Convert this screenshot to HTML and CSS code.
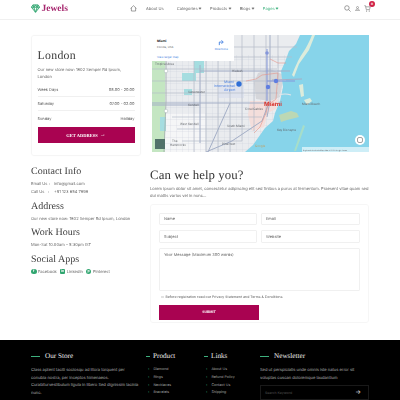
FILE: index.html
```html
<!DOCTYPE html>
<html lang="en">
<head>
<meta charset="utf-8">
<title>Jewels - Contact</title>
<link rel="stylesheet" href="styles.css">
</head>
<body>
<header class="header">
  <a class="logo">
    <svg class="gem" viewBox="0 0 10 10"><path d="M2.2 1h5.600L9.600 3.600 5 9.200.4 3.600zM.4 3.600h9.200M3.200 3.600 5 9.200l1.800-5.600M3.200 3.600 2.200 1M6.800 3.600 7.800 1M3.200 3.600 5 1l1.800 2.600" fill="#d5f0e2" stroke="#2fa56f" stroke-width="1"/></svg>
    <span>Jewels</span>
  </a>
  <nav class="nav">
    <svg class="home" viewBox="0 0 10 10"><path d="M.8 5 5 1l4.200 4M2 4v4.600h6V4" fill="none" stroke="#555" stroke-width=".8"/></svg>
    <span class="about">About Us</span>
    <span class="menu">Categories<i class="chev"></i></span>
    <span class="menu">Products<i class="chev"></i></span>
    <span class="menu">Blogs<i class="chev"></i></span>
    <span class="menu active">Pages<i class="chev"></i></span>
  </nav>
  <div class="tools">
    <svg class="tool" viewBox="0 0 10 10"><circle cx="4.200" cy="4.200" r="3.200" fill="none" stroke="#666" stroke-width=".9"/><path d="m6.600 6.600 2.800 2.800" stroke="#666" stroke-width=".9"/></svg>
    <svg class="tool small" viewBox="0 0 10 10"><circle cx="5" cy="3" r="2" fill="none" stroke="#666" stroke-width="1"/><path d="M1 9.200c0-4 8-4 8 0z" fill="none" stroke="#666" stroke-width="1"/></svg>
    <div class="cart">
      <svg class="tool" viewBox="0 0 10 10"><path d="M.5 1h1.600l1.200 5.600h4.600l1-4H2.500" fill="none" stroke="#666" stroke-width=".8"/><circle cx="3.700" cy="8.500" r=".8" fill="#666"/><circle cx="7.500" cy="8.500" r=".8" fill="#666"/></svg>
      <b class="badge">0</b>
    </div>
  </div>
</header>

<main class="main">
  <section class="top">
    <aside class="store">
      <h2 class="city">London</h2>
      <p class="txt store-addr">Our new store now: 1802 Semper Rd Ipsum, London</p>
      <div class="hours"><span>Week Days</span><span>08.00 - 20.00</span></div>
      <div class="hours"><span>Saturday</span><span>07.00 - 02.00</span></div>
      <div class="hours last"><span>Sunday</span><span>Holiday</span></div>
      <a class="get">GET ADDRESS <span class="arr">→</span></a>
    </aside>
    <div class="map">
      <svg class="map-art" viewBox="0 0 217 117" preserveAspectRatio="none">
        <defs>
          <pattern id="grid" width="6" height="6" patternUnits="userSpaceOnUse">
            <path d="M6 0H0V6" fill="none" stroke="#cdd0da" stroke-width=".5"/>
          </pattern>
        </defs>
        <rect width="217" height="117" fill="#eaecef"/>
        <path d="M0 0h13v117H0zM13 0h30v26H13z" fill="#c4e6c2"/>
        <path d="M13 78h40v39H13z" fill="#f5f6f7"/>
        <rect x="13" y="20" width="137" height="97" fill="url(#grid)"/>
        <path d="M42 26h10v12H42zM30 38h14v8H30zM32 54h8v6h-8zM8 82h6v14H8z" fill="#a4dde0"/>
        <path d="M66 50h26v13H66z" fill="#dfe3ee"/>
        <path d="M106 38l12-4 14 6-4 22-10 4-14-2-2-16z" fill="#d5d6da"/>
        <path d="M98 66h20l8-2-2 10-8 4-4 14-12 4 -4-16z" fill="#f4dedb"/>
        <path d="M148 0h69v117H93l8-7 12-17 8-7 2-8 5-12 3-14-2-16 4-9 4-11 7-7z" fill="#86d4ea"/>
        <path d="M140 40q6-16 12-24 4-6 8-16h3l-6 15-10 14-5 13zM147 50l4-1 1 12-3 1zM152 65l6-2 2 3-5 4z" fill="#dcecdc"/>
        <path d="M127 80l12-4 6 2 2 4-12 3-6 2z" fill="#bcd8b4"/>
        <path d="M151 90l2 1-9 25h-2z" fill="#a6dec8"/>
        <path d="M120 46q6-2 14-1M127 60q6-2 12 0" fill="none" stroke="#e3e6ea" stroke-width="1.200"/>
        <g fill="none" stroke="#b6bbc9" stroke-width=".7">
          <path d="M0 34h125M0 46h128M0 58h126M20 82h90M25 94h75M30 106h60M15 22h125M40 12h105"/>
          <path d="M42 26v91M54 0v117M66 0v117M78 20v97M90 0v106M102 0v96M114 0v80M126 0v50"/>
        </g>
        <g fill="none" stroke="#a3aec6" stroke-width="1">
          <path d="M0 68h116M0 70h48M48 30v78M118 0v66l-3 16M138 36H48M78 68l-22 49M116 70l-6 16-30 20-26 11M150 44l-30 1"/>
        </g>
        <g fill="none" stroke="#8496da" stroke-width="1">
          <path d="M115 14v52M115 46h28"/>
        </g>
        <path d="M14 0v66l-2 51" fill="none" stroke="#a6b2b0" stroke-width=".9"/>
        <path d="M94 46l10-2 6-4 16-2-2 26-8 6-2 8-6 14-6 6M118 24l8 4 8 0" fill="none" stroke="#e49488" stroke-width=".6"/>
        <circle cx="115" cy="18" r="1.800" fill="#8496da"/>
        <circle cx="124" cy="46" r="2.200" fill="#5f7de0"/>
        <circle cx="116" cy="52" r="2.200" fill="#5f7de0"/>
        <circle cx="87" cy="49" r="2.700" fill="#2f6fd6"/>
        <circle cx="14" cy="36" r="1.800" fill="#fff" stroke="#9aa" stroke-width=".4"/>
        <circle cx="14" cy="76" r="1.800" fill="#fff" stroke="#9aa" stroke-width=".4"/>
        <text class="m" x="80" y="37">Hialeah</text>
        <text class="m m-blue" x="72" y="48">Miami</text>
        <text class="m m-blue" x="62" y="52">International</text>
        <text class="m m-blue" x="72" y="56">Airport</text>
        <text class="m" x="36" y="58">Sweetwater</text>
        <text class="m" x="36" y="71">Kendall</text>
        <text class="m m-big" x="112" y="71">Miami</text>
        <text class="m" x="93" y="75">Coral Gables</text>
        <text class="m" x="28" y="90">West Kendall</text>
        <text class="m" x="75" y="92">South Miami</text>
        <text class="m" x="150" y="70">Miami Beach</text>
        <text class="m" x="125" y="96">Key Biscayne</text>
        <text class="m" x="20" y="107">The</text>
        <text class="m" x="18" y="111">Hammocks</text>
        <text class="m" x="70" y="110">Pinecrest</text>
        <text class="m" x="3" y="30">Tropical Area</text>
        <rect x="3" y="104" width="10" height="10" fill="#4f7068"/>
        <text class="m g" x="103" y="112">Google</text>
        <circle cx="208" cy="105" r="5" fill="#fff"/>
        <rect x="205.500" y="102.500" width="5" height="5" rx="1.500" fill="none" stroke="#666" stroke-width=".6"/>
        <rect x="150" y="112" width="67" height="5" fill="#fff" fill-opacity=".6"/>
        <text class="m m-tiny" x="151" y="115.500">Keyboard shortcuts   Map data ©2023 Google   Terms</text>
      </svg>
      <div class="map-card">
        <div class="mc-text"><b>Miami</b><span>Florida, USA</span><em>View larger map</em></div>
        <div class="mc-dir"><svg class="dir" viewBox="0 0 8 8"><path d="M1.500 7V3.500h4M4 1.500l2 2-2 2" fill="none" stroke="#3b7be0" stroke-width="1"/></svg><em>Directions</em></div>
      </div>
    </div>
  </section>

  <section class="bottom">
    <aside class="info">
      <h3 class="h">Contact Info</h3>
      <p class="txt line"><span class="lab">Email Us :</span>info@gmail.com</p>
      <p class="txt line"><span class="lab">Call Us &nbsp;&nbsp;:</span>+91 123 654 7898</p>
      <h3 class="h">Address</h3>
      <p class="txt line">Our new store now: 1802 Semper Rd Ipsum, London</p>
      <h3 class="h">Work Hours</h3>
      <p class="txt line">Mon-Sat 10.00am – 5:30pm IST</p>
      <h3 class="h">Social Apps</h3>
      <div class="social">
        <span><i class="soc round">f</i>Facebook</span>
        <span><i class="soc">in</i>LinkedIn</span>
        <span><i class="soc round">p</i>Pinterest</span>
      </div>
    </aside>
    <div class="help">
      <h1 class="title">Can we help you?</h1>
      <p class="txt intro">Lorem ipsum dolor sit amet, consectetur adipiscing elit sed finibus a purus at fermentum. Praesent vitae quam sed dui mattis varius vel in nunc...</p>
      <form class="form">
        <div class="grid">
          <div class="field">Name</div>
          <div class="field">Email</div>
          <div class="field">Subject</div>
          <div class="field">Website</div>
          <div class="field area">Your Message (Maximum 300 words)</div>
        </div>
        <div class="agree"><i class="box"></i>Before registration read our Privacy Statement and Terms &amp; Conditions</div>
        <a class="submit">SUBMIT</a>
      </form>
    </div>
  </section>
</main>

<footer class="footer">
  <div class="f-col store-col">
    <h4 class="f-h"><i class="dash long"></i>Our Store</h4>
    <p class="f-txt">Class aptent taciti sociosqu ad litora torquent per<br>conubia nostra, per inceptos himenaeos.<br>Curabiturvestibulum ligula in libero Sed dignissim lacinia<br>nunc.</p>
  </div>
  <div class="f-col prod-col">
    <h4 class="f-h"><i class="dash"></i>Product</h4>
    <ul class="f-list"><li>Diamond</li><li>Rings</li><li>Necklaces</li><li>Bracelets</li></ul>
  </div>
  <div class="f-col link-col">
    <h4 class="f-h"><i class="dash"></i>Links</h4>
    <ul class="f-list"><li>About Us</li><li>Refund Policy</li><li>Contact Us</li><li>Shipping</li></ul>
  </div>
  <div class="f-col news-col">
    <h4 class="f-h"><i class="dash long"></i>Newsletter</h4>
    <p class="f-txt">Sed ut perspiciatis unde omnis iste natus error sit<br>voluptas cuscan doloremque laudantium</p>
    <div class="search"><span>Search Keyword</span><span class="s-arr">→</span></div>
  </div>
</footer>
</body>
</html>
```
FILE: styles.css
```css
* { box-sizing: border-box; }
html, body { margin: 0; height: 400px; overflow: hidden; }
body { background: #fff; font-family: "Inter", "Noto Sans", sans-serif; color: #555; font-size: 4px; text-rendering: geometricPrecision; }
h1, h2, h3, h4, p, ul { margin: 0; padding: 0; }
i, em { font-style: normal; }
.header, .main { opacity: .99; }

.header { height: 20px; border-bottom: 1px solid #f0f0f0; display: flex; align-items: center; padding: 0 29px 2px 31px; }
.logo { display: flex; align-items: center; gap: 1.500px; width: 99px; font: 700 9.500px "Liberation Serif", serif; color: #a5256d; }
.gem { width: 9px; height: 9px; }
.nav { display: flex; align-items: center; font-size: 4.050px; color: #666; flex: 1; }
.home { width: 7px; height: 7px; margin-right: 9px; }
.about { margin-right: 13px; }
.menu { margin-right: 9px; display: flex; align-items: center; gap: 1.500px; }
.chev { width: 2px; height: 2px; border-right: .5px solid #777; border-bottom: .5px solid #777; transform: rotate(45deg); margin-top: -1px; }
.active { color: #3fb27f; }
.active .chev { border-color: #3fb27f; }
.tools { display: flex; align-items: center; gap: 4px; }
.tool { width: 7px; height: 7px; display: block; }
.small { width: 5px; height: 5px; }
.cart { position: relative; }
.badge { position: absolute; top: -4px; left: 5px; width: 6px; height: 6px; border-radius: 50%; background: #cf1f45; color: #fff; font-size: 3px; line-height: 6px; text-align: center; }

.main { padding: 15px 31px 0; }
.top { display: flex; gap: 11px; align-items: flex-start; }
.store { width: 110px; height: 121px; padding: 12px 5.500px 0; border: 1px solid #f5f5f5; border-radius: 3px; box-shadow: 0 0 3px rgba(0,0,0,.03); }
.city { font: 400 11.800px/14px "Liberation Serif", serif; letter-spacing: .3px; color: #3a3a3a; margin-bottom: 4px; }
.txt { font-size: 4.050px; line-height: 7.200px; color: #666; }
.store-addr { margin-bottom: 2px; }
.hours { display: flex; justify-content: space-between; height: 14.300px; align-items: center; border-bottom: .5px solid #f0f0f0; font-size: 3.950px; color: #555; }
.last { border-bottom: 0; }
.get { display: flex; align-items: center; justify-content: center; gap: 2px; height: 16px; margin-top: 2px; background: #a8004f; color: #fff; font: 700 4.500px "Liberation Serif", serif; }
.arr { font-size: 6px; line-height: 6px; }

.map { flex: 1; height: 117px; position: relative; overflow: hidden; }
.map-art { width: 100%; height: 100%; display: block; filter: blur(.25px); }
.m { font-size: 3px; fill: #5f6368; font-family: "Inter", sans-serif; }
.m-big { font-size: 6px; font-weight: 700; fill: #d8332c; }
.m-blue { font-size: 3.500px; fill: #4a80e0; }
.m-tiny { font-size: 1.800px; }
.g { fill: #c0a060; }
.map-card { position: absolute; top: 0; left: 0; width: 82px; height: 26px; background: #fff; display: flex; justify-content: space-between; padding: 4px 5px; font-size: 2.800px; color: #666; }
.mc-text { display: flex; flex-direction: column; gap: 2px; }
.mc-text b { color: #222; font-size: 3.200px; }
.mc-text em, .mc-dir em { color: #3b7be0; }
.mc-text em { margin-top: 4px; }
.mc-dir { display: flex; flex-direction: column; align-items: center; gap: 1px; margin-right: 1px; }
.dir { width: 7px; height: 7px; }

.bottom { display: flex; gap: 11px; margin-top: 8px; }
.info { width: 110px; }
.h { font: 400 10px/15px "Liberation Serif", serif; color: #3a3a3a; margin-bottom: 1px; }
.info .line { line-height: 8px; }
.line + .h { margin-top: 2.500px; }
.lab { display: inline-block; width: 23px; white-space: nowrap; }
.social { display: flex; gap: 3px; font-size: 4.050px; color: #666; margin-top: 2px; }
.social span { display: flex; align-items: center; gap: 1.500px; }
.soc { width: 5.500px; height: 5.500px; background: #2fa56f; color: #fff; font-size: 3.500px; line-height: 5.500px; text-align: center; font-weight: 700; border-radius: 1px; }
.round { border-radius: 50%; }

.help { flex: 1; }
.title { font: 400 12.800px/18px "Liberation Serif", serif; color: #333; letter-spacing: .1px; margin-top: 2px; margin-bottom: .5px; }
.intro { line-height: 7px; margin-bottom: 5px; }
.form { height: 119px; padding: 8px; border: 1px solid #f6f6f6; border-radius: 3px; }
.grid { display: grid; grid-template-columns: 98px 99px; gap: 5px 4px; }
.field { height: 12.500px; border: .5px solid #f0f0f0; border-radius: 1px; padding: 0 4px; display: flex; align-items: center; font-size: 3.950px; color: #666; }
.area { grid-column: 1 / -1; height: 43px; align-items: flex-start; padding-top: 3px; }
.agree { display: flex; align-items: center; gap: 2px; height: 11px; margin-top: 1px; padding-left: 2px; font-size: 3.500px; color: #555; }
.box { width: 2.500px; height: 2.500px; border: .5px solid #e2e2e2; }
.submit { display: flex; align-items: center; justify-content: center; width: 100px; height: 15px; margin-top: 2px; background: #a8004f; color: #fff; font-size: 3.500px; font-weight: 700; }

.footer { margin-top: 17.500px; height: 70px; background: #000; display: flex; color: #fff; padding: 10px 0 0 31px; }
.f-col { flex: none; opacity: .99; }
.store-col { width: 115px; }
.prod-col { width: 58px; }
.link-col { width: 56px; }
.news-col { width: 112px; }
.f-h { font: 400 7.200px/12px "Liberation Serif", serif; display: flex; align-items: center; margin-bottom: 4px; color: #f2f2f2; white-space: nowrap; }
.dash { width: 4px; height: .7px; background: #3fb27f; margin-right: 3px; }
.long { width: 9px; margin-right: 5px; }
.f-txt { font-size: 4.050px; line-height: 7.600px; color: #b8b8b8; white-space: nowrap; }
.f-list { list-style: none; padding-left: 2px; font-size: 3.600px; line-height: 7.800px; color: #a8a8a8; }
.f-list li::before { content: "›"; color: #3fb27f; margin-right: 4px; }
.search { display: flex; justify-content: space-between; align-items: center; width: 109px; height: 15px; margin-top: 4px; padding: 0 7px 0 4px; border: .5px solid #1a1a1a; font-size: 3.500px; color: #555; }
.s-arr { color: #eee; font-size: 6px; }
```
